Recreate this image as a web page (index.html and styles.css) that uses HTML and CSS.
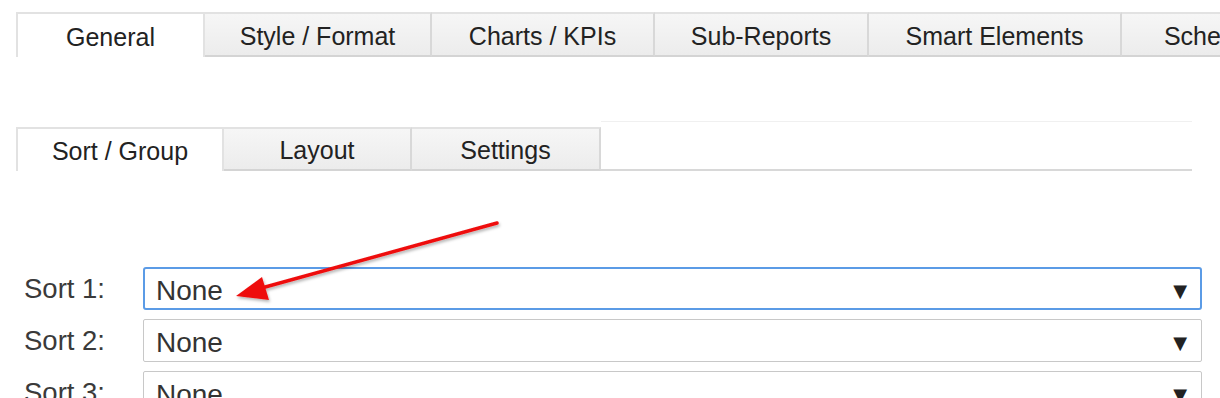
FILE: index.html
```html
<!DOCTYPE html>
<html>
<head>
<meta charset="utf-8">
<link rel="stylesheet" href="styles.css">
</head>
<body>
<div class="page">
  <div class="tabs-main">
    <div class="tab active t1">General</div>
    <div class="tab t2">Style / Format</div>
    <div class="tab t3">Charts / KPIs</div>
    <div class="tab t4">Sub-Reports</div>
    <div class="tab t5">Smart Elements</div>
    <div class="tab t6">Schedule</div>
  </div>

  <div class="tabs-sub">
    <div class="tab active s1">Sort / Group</div>
    <div class="tab s2">Layout</div>
    <div class="tab s3">Settings</div>
    <div class="tabs-fill"></div>
  </div>

  <div class="sorts">
    <div class="sort-row">
      <div class="sort-label">Sort 1:</div>
      <div class="select focused"><span class="select-value">None</span><span class="select-arrow">▼</span></div>
    </div>
    <div class="sort-row">
      <div class="sort-label">Sort 2:</div>
      <div class="select"><span class="select-value">None</span><span class="select-arrow">▼</span></div>
    </div>
    <div class="sort-row">
      <div class="sort-label">Sort 3:</div>
      <div class="select"><span class="select-value">None</span><span class="select-arrow">▼</span></div>
    </div>
  </div>

  <svg class="annotation" width="1220" height="398" viewBox="0 0 1220 398">
    <defs>
      <filter id="sh" x="-10%" y="-10%" width="120%" height="130%">
        <feDropShadow dx="1" dy="2" stdDeviation="1.5" flood-color="#000" flood-opacity="0.3"/>
      </filter>
    </defs>
    <g filter="url(#sh)">
      <line x1="497" y1="211" x2="258" y2="277" stroke="#ee1111" stroke-width="3.5" stroke-linecap="round"/>
      <polygon points="236,284 262,265 269,288" fill="#ee1111"/>
    </g>
  </svg>
</div>
</body>
</html>
```
FILE: styles.css
```css
html, body {
  margin: 0;
  padding: 0;
  background: #ffffff;
  overflow: hidden;
}

.page {
  position: relative;
  width: 1220px;
  height: 398px;
  font-family: "Liberation Sans", Arial, sans-serif;
  color: #222;
}

.tabs-main {
  display: flex;
  margin: 12px 0 0 16px;
  height: 45px;
  width: 1400px;
}

.tab {
  box-sizing: border-box;
  display: flex;
  align-items: center;
  justify-content: center;
  padding-top: 3px;
  font-size: 25px;
  color: #222;
  flex: none;
  border-top: 2px solid #e2e2e2;
  border-right: 2px solid #d8d8d8;
  border-bottom: 2px solid #d4d4d4;
  background: linear-gradient(#f6f6f6, #ececec);
}

.tab.active {
  background: #fff;
  border-left: 2px solid #e2e2e2;
  border-right: 2px solid #e2e2e2;
  border-bottom: none;
}

.t1 { width: 189px; }
.t2 { width: 227px; }
.t3 { width: 223px; }
.t4 { width: 214px; }
.t5 { width: 253px; }
.t6 { width: 190px; }

.tabs-sub {
  display: flex;
  align-items: flex-end;
  margin: 64px 0 0 16px;
  height: 50px;
  width: 1176px;
}

.tabs-sub .tab {
  height: 44px;
  padding-top: 2px;
}

.s1 { width: 208px; }
.s2 { width: 188px; }
.s3 { width: 189px; }

.tabs-fill {
  flex: 1;
  align-self: stretch;
  box-sizing: border-box;
  border-top: 1px solid #f0f0f0;
  border-bottom: 2px solid #d8d8d8;
}

.sorts {
  display: flex;
  flex-direction: column;
  gap: 9px;
  margin: 96px 0 0 24px;
}

.sort-row {
  display: flex;
  align-items: center;
}

.sort-label {
  width: 119px;
  font-size: 27.5px;
  color: #3a3a3a;
}

.select {
  box-sizing: border-box;
  width: 1059px;
  height: 43px;
  display: flex;
  align-items: center;
  justify-content: space-between;
  padding: 4px 14px 0 12px;
  border: 1px solid #c8c8c8;
  border-radius: 2px;
  background: #fff;
}

.select.focused {
  border: 2px solid #5b9be6;
  border-radius: 3px;
  padding-left: 11px;
  padding-right: 13px;
}

.select-value {
  font-size: 28px;
  color: #333;
}

.select-arrow {
  font-size: 18px;
  color: #222;
  font-family: "DejaVu Sans", sans-serif;
}

.annotation {
  position: absolute;
  left: 0;
  top: 0;
  pointer-events: none;
}
```
